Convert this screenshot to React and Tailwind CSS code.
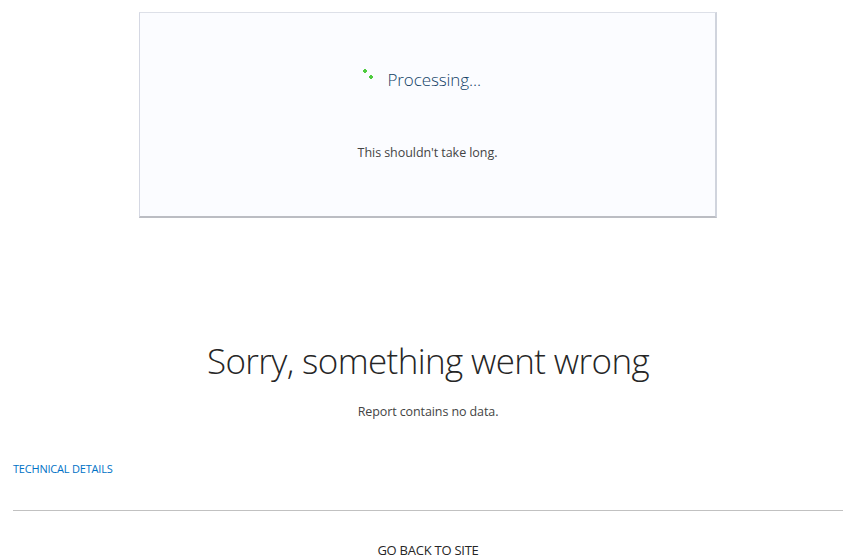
const font = "font-['Open_Sans','Noto_Sans',sans-serif]";

function Spinner() {
  return (
    <svg className="h-6 w-6 shrink-0" viewBox="0 0 24 24" fill="#4fcb3f" shapeRendering="crispEdges">
      <path d="M10 3h2v1h1v2h-1v1h-2v-1h-1v-2h1z" />
      <path d="M16 9h2v1h1v2h-1v1h-2v-1h-1v-2h1z" />
    </svg>
  );
}

function ProcessingCard() {
  return (
    <section className="mx-auto flex h-[206px] w-[578px] flex-col items-center border-t border-r-2 border-b-2 border-l border-t-[#dde0e8] border-r-[#d0d4dd] border-b-[#bbbdc3] border-l-[#d5d8e3] bg-[#fbfcff]">
      <div className="mt-[53px] flex h-7 w-[148px] items-start">
        <Spinner />
        <h2 className="ml-[10px] text-[17px] leading-7 font-light tracking-[-0.1px] whitespace-nowrap text-[#123f66]">Processing...</h2>
      </div>
      <p className="mt-[49px] text-[12.5px] leading-5 tracking-[-0.06px] whitespace-nowrap text-[#444444]">This shouldn't take long.</p>
    </section>
  );
}

export default function App() {
  return (
    <main className={`${font} flex h-[557px] w-[850px] flex-col bg-white pt-3 pr-[7px] pl-[13px]`}>
      <div className="-ml-[13px] -mr-[7px] pl-[6px]">
        <ProcessingCard />
      </div>
      <h1 className="mt-[113px] text-center text-[35px] leading-[60px] font-light tracking-[-0.63px] whitespace-nowrap text-[#262626]">
        Sorry, something went wrong
      </h1>
      <p className="mt-[11px] text-center text-[12.5px] leading-5 tracking-[-0.1px] text-[#444444]">Report contains no data.</p>
      <a className="mt-[37px] self-start text-[11px] leading-5 tracking-[-0.2px] whitespace-nowrap text-[#0072c6]">TECHNICAL DETAILS</a>
      <hr className="mt-[31px] border-t border-[#c1c1c1]" />
      <a className="mt-[33px] text-center text-[13px] leading-[13px] tracking-[-0.25px] whitespace-nowrap text-[#262626]">GO BACK TO SITE</a>
    </main>
  );
}
